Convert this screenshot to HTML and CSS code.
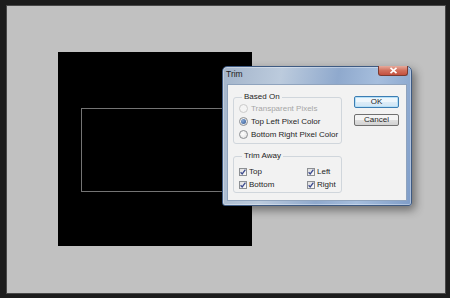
FILE: index.html
```html
<!DOCTYPE html>
<html lang="en">
<head>
    <meta charset="UTF-8">
    <meta name="viewport" content="width=device-width, initial-scale=1.0">
    <title>Trim</title>
    <link rel="stylesheet" href="styles.css">
</head>
<body>

    <!-- Workspace with the document -->
    <div class="workspace">
        <div class="canvas">
            <div class="doc">
                <div class="selection"></div>
            </div>
        </div>
    </div>

    <!-- Trim dialog -->
    <div class="dialog">
        <div class="titlebar">
            <span class="title">Trim</span>
            <span class="close">
                <svg width="9" height="7" viewBox="0 0 9 7">
                    <path d="M1.5 0.8 L7.5 6.2 M7.5 0.8 L1.5 6.2" stroke="#fff" stroke-width="1.6" fill="none"/>
                </svg>
            </span>
        </div>
        <div class="dialog-body">
            <div class="groups">
                <fieldset class="group based-on">
                    <legend>Based On</legend>
                    <label class="option disabled"><span class="radio"></span>Transparent Pixels</label>
                    <label class="option"><span class="radio checked"></span>Top Left Pixel Color</label>
                    <label class="option"><span class="radio"></span>Bottom Right Pixel Color</label>
                </fieldset>
                <fieldset class="group trim-away">
                    <legend>Trim Away</legend>
                    <div class="checks">
                        <label class="option check-option"><span class="check"><svg width="6" height="6" viewBox="0 0 6 6"><path d="M0.6 3.2 L2.2 4.9 L5.4 0.6" stroke="#3d4b8f" stroke-width="1.3" fill="none"/></svg></span>Top</label>
                        <label class="option check-option"><span class="check"><svg width="6" height="6" viewBox="0 0 6 6"><path d="M0.6 3.2 L2.2 4.9 L5.4 0.6" stroke="#3d4b8f" stroke-width="1.3" fill="none"/></svg></span>Left</label>
                        <label class="option check-option"><span class="check"><svg width="6" height="6" viewBox="0 0 6 6"><path d="M0.6 3.2 L2.2 4.9 L5.4 0.6" stroke="#3d4b8f" stroke-width="1.3" fill="none"/></svg></span>Bottom</label>
                        <label class="option check-option"><span class="check"><svg width="6" height="6" viewBox="0 0 6 6"><path d="M0.6 3.2 L2.2 4.9 L5.4 0.6" stroke="#3d4b8f" stroke-width="1.3" fill="none"/></svg></span>Right</label>
                    </div>
                </fieldset>
            </div>
            <div class="buttons">
                <button type="button" class="btn default">OK</button>
                <button type="button" class="btn">Cancel</button>
            </div>
        </div>
    </div>

</body>
</html>
```

FILE: styles.css
```css
body {
    margin: 0;
    width: 450px;
    height: 298px;
    background-color: #1c1c1c;
    font-family: "Liberation Sans", Arial, sans-serif;
    font-size: 8px;
    color: #1e1e1e;
    position: relative;
    overflow: hidden;
}

/* workspace */
.workspace {
    padding: 5px 4px 4px 6px;
}
.canvas {
    height: 289px;
    box-sizing: border-box;
    border: 1px solid #484848;
    background-color: #c1c1c1;
    padding: 46px 0 0 51px;
}
.doc {
    width: 194px;
    height: 194px;
    background-color: #000;
    padding-top: 56px;
    box-sizing: border-box;
}
.selection {
    margin-left: 23px;
    width: 170px;
    height: 84px;
    box-sizing: border-box;
    border: 1px solid #747474;
}

/* dialog window */
.dialog {
    position: absolute;
    left: 222px;
    top: 66px;
    width: 190px;
    height: 140px;
    box-sizing: border-box;
    padding: 0 4px 4px 4px;
    border: 1px solid #3e5a82;
    border-radius: 5px 5px 3px 3px;
    background: linear-gradient(100deg, #a3b4ca 0%, #bccbdd 28%, #8fa9cd 55%, #a6bedd 74%, #7f9dc8 100%);
    box-shadow: 3px 4px 10px rgba(0, 0, 0, 0.45), inset 0 0 0 1px rgba(255, 255, 255, 0.35);
}
.titlebar {
    height: 17px;
    display: flex;
    justify-content: space-between;
    align-items: flex-start;
}
.title {
    margin-left: -1px;
    line-height: 15px;
    font-size: 8.5px;
    color: #1e1e1e;
}
.close {
    width: 30px;
    height: 10px;
    margin-right: -1px;
    margin-top: -1px;
    box-sizing: border-box;
    border: 1px solid #7a3a30;
    border-top: none;
    border-radius: 0 0 3px 3px;
    background: linear-gradient(#e6aa9c, #d16f5c 50%, #c4503f);
    display: flex;
    align-items: center;
    justify-content: center;
}
.close svg {
    display: block;
}

.dialog-body {
    height: 117px;
    box-sizing: border-box;
    border: 1px solid #8fa3bd;
    background-color: #f2f2f2;
    padding: 7px 0 0 5px;
    display: flex;
}

/* group boxes */
.groups {
    width: 109px;
}
.group {
    margin: 0;
    width: 109px;
    box-sizing: border-box;
    border: 1px solid #d0d6dc;
    border-radius: 3px;
    padding: 0 0 2px 5px;
}
.group legend {
    margin-left: 3px;
    padding: 0 2px;
    line-height: 10px;
}
.trim-away {
    margin-top: 7px;
    padding-top: 4px;
    padding-bottom: 1px;
}
.option {
    display: flex;
    align-items: center;
    gap: 3px;
    height: 13px;
    white-space: nowrap;
}
.option.disabled {
    color: #a6a6a6;
}
.radio {
    width: 9px;
    height: 9px;
    box-sizing: border-box;
    border: 1px solid #8c8f93;
    border-radius: 50%;
    background: radial-gradient(circle at 40% 40%, #ffffff, #dcdcdc);
    display: flex;
    align-items: center;
    justify-content: center;
}
.disabled .radio {
    border-color: #cacaca;
    background: #f4f4f4;
}
.radio.checked::after {
    content: "";
    width: 5px;
    height: 5px;
    border-radius: 50%;
    background: radial-gradient(circle at 35% 35%, #88a9d6, #2d5592);
}

.checks {
    display: grid;
    grid-template-columns: 68px auto;
}
.check-option {
    gap: 2px;
}
.check {
    width: 8px;
    height: 8px;
    box-sizing: border-box;
    border: 1px solid #8c8f93;
    background: linear-gradient(135deg, #dedede, #fbfbfb);
    display: flex;
    align-items: center;
    justify-content: center;
}
.check svg {
    display: block;
}

/* buttons */
.buttons {
    margin-left: 12px;
    margin-top: 4px;
    display: flex;
    flex-direction: column;
    gap: 6px;
}
.btn {
    width: 45px;
    height: 12px;
    padding: 0;
    font-family: "Liberation Sans", Arial, sans-serif;
    font-size: 8px;
    line-height: 10px;
    color: #1e1e1e;
    border: 1px solid #707070;
    border-radius: 2px;
    background: linear-gradient(#f4f4f4 50%, #e0e0e0 50%, #d2d2d2);
}
.btn.default {
    border-color: #3c7db3;
    background: linear-gradient(#eef6fc 50%, #dcecf8 50%, #cfe5f5);
    box-shadow: inset 0 0 0 1px #b6e0f7;
}
```
